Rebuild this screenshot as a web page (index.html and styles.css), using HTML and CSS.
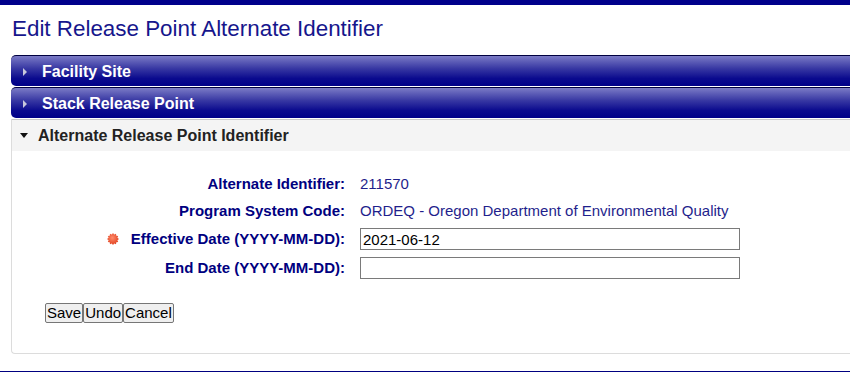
FILE: index.html
```html
<!DOCTYPE html>
<html>
<head>
    <title>Edit Release Point Alternate Identifier</title>
    <link rel="stylesheet" href="styles.css">
</head>
<body>
    <div class="topbar"></div>
    <div class="page">
        <h1>Edit Release Point Alternate Identifier</h1>

        <div class="bar closed"><span class="arrow-right"></span>Facility Site</div>
        <div class="bar closed"><span class="arrow-right"></span>Stack Release Point</div>

        <div class="panel">
            <div class="panel-head"><span class="arrow-down"></span>Alternate Release Point Identifier</div>
            <div class="panel-body">
                <form class="fields">
                    <label>Alternate Identifier:</label>
                    <span class="value">211570</span>

                    <label>Program System Code:</label>
                    <span class="value">ORDEQ - Oregon Department of Environmental Quality</span>

                    <label for="effDate">
                        <svg class="required" width="12" height="12" viewBox="0 0 12 12">
                            <defs>
                                <radialGradient id="dot" cx="45%" cy="40%" r="60%">
                                    <stop offset="0" stop-color="#ff8a6a"/>
                                    <stop offset="1" stop-color="#e0401e"/>
                                </radialGradient>
                            </defs>
                            <polygon fill="url(#dot)" points="6,0 7.2,1.6 9,0.8 9.3,2.7 11.2,3 10.4,4.8 12,6 10.4,7.2 11.2,9 9.3,9.3 9,11.2 7.2,10.4 6,12 4.8,10.4 3,11.2 2.7,9.3 0.8,9 1.6,7.2 0,6 1.6,4.8 0.8,3 2.7,2.7 3,0.8 4.8,1.6"/>
                        </svg>Effective Date (YYYY-MM-DD):
                    </label>
                    <input type="text" id="effDate" value="2021-06-12">

                    <label for="endDate">End Date (YYYY-MM-DD):</label>
                    <input type="text" id="endDate" value="">
                </form>

                <div class="buttons">
                    <button>Save</button><button>Undo</button><button>Cancel</button>
                </div>
            </div>
        </div>
    </div>
    <div class="footer"></div>
</body>
</html>
```

FILE: styles.css
```css
body {
    font-family: "Liberation Sans", Arial, sans-serif;
    margin: 0;
    padding: 0;
    overflow: hidden;
}

.topbar {
    height: 5px;
    background-color: #00008b;
}

.page {
    padding-left: 11px;
    margin-right: -12px;
}

h1 {
    font-size: 22.4px;
    font-weight: normal;
    line-height: 28px;
    color: #16168c;
    margin: 10px 0 12px 1px;
}

.bar {
    height: 30px;
    line-height: 31px;
    border-top: 1px solid #000040;
    border-radius: 5px 0 0 5px;
    margin-bottom: 1px;
    background: linear-gradient(#7b7bc6, #3a3aa4 40%, #0a0a8e 75%, #000088);
    color: #fff;
    font-size: 16px;
    font-weight: bold;
    padding-left: 12px;
}

.arrow-right {
    display: inline-block;
    width: 0;
    height: 0;
    border-top: 4px solid transparent;
    border-bottom: 4px solid transparent;
    border-left: 4px solid #c8c8dc;
    margin-right: 15px;
    vertical-align: 1px;
}

.panel {
    border: 1px solid #dcdcdc;
    border-right: none;
    border-radius: 0 0 0 4px;
    margin-top: 1px;
}

.panel-head {
    height: 31px;
    line-height: 31px;
    background-color: #f4f4f4;
    border-top: 1px solid #c8c8c8;
    margin-top: -1px;
    font-size: 16px;
    font-weight: bold;
    color: #222;
    padding-left: 8px;
}

.arrow-down {
    display: inline-block;
    width: 0;
    height: 0;
    border-left: 4px solid transparent;
    border-right: 4px solid transparent;
    border-top: 5px solid #111;
    margin-right: 10px;
    vertical-align: 3px;
}

.panel-body {
    padding: 22px 0 30px 0;
}

.fields {
    display: grid;
    grid-template-columns: 333px 380px;
    column-gap: 15px;
    row-gap: 5px;
    align-items: center;
    font-size: 15px;
}

.fields label {
    text-align: right;
    font-weight: bold;
    color: #000080;
    line-height: 22px;
}

.fields .value {
    color: #1f1f8c;
    line-height: 22px;
}

.required {
    vertical-align: -1px;
    margin-right: 12px;
}

.fields input {
    box-sizing: border-box;
    height: 22px;
    margin: 1px 0;
    border: 1px solid #7a7a7a;
    padding: 0 2px;
    font-family: "Liberation Sans", Arial, sans-serif;
    font-size: 15px;
    color: #000;
}

.buttons {
    display: flex;
    margin: 23px 0 0 33px;
}

button {
    font-family: "Liberation Sans", Arial, sans-serif;
    font-size: 15px;
    line-height: 18px;
    padding: 0 1px;
    background-color: #efefef;
    color: #000;
    border: 1px solid #767676;
    border-radius: 2px;
}

.footer {
    margin-top: 17px;
    border-top: 1px solid #000080;
}
```
